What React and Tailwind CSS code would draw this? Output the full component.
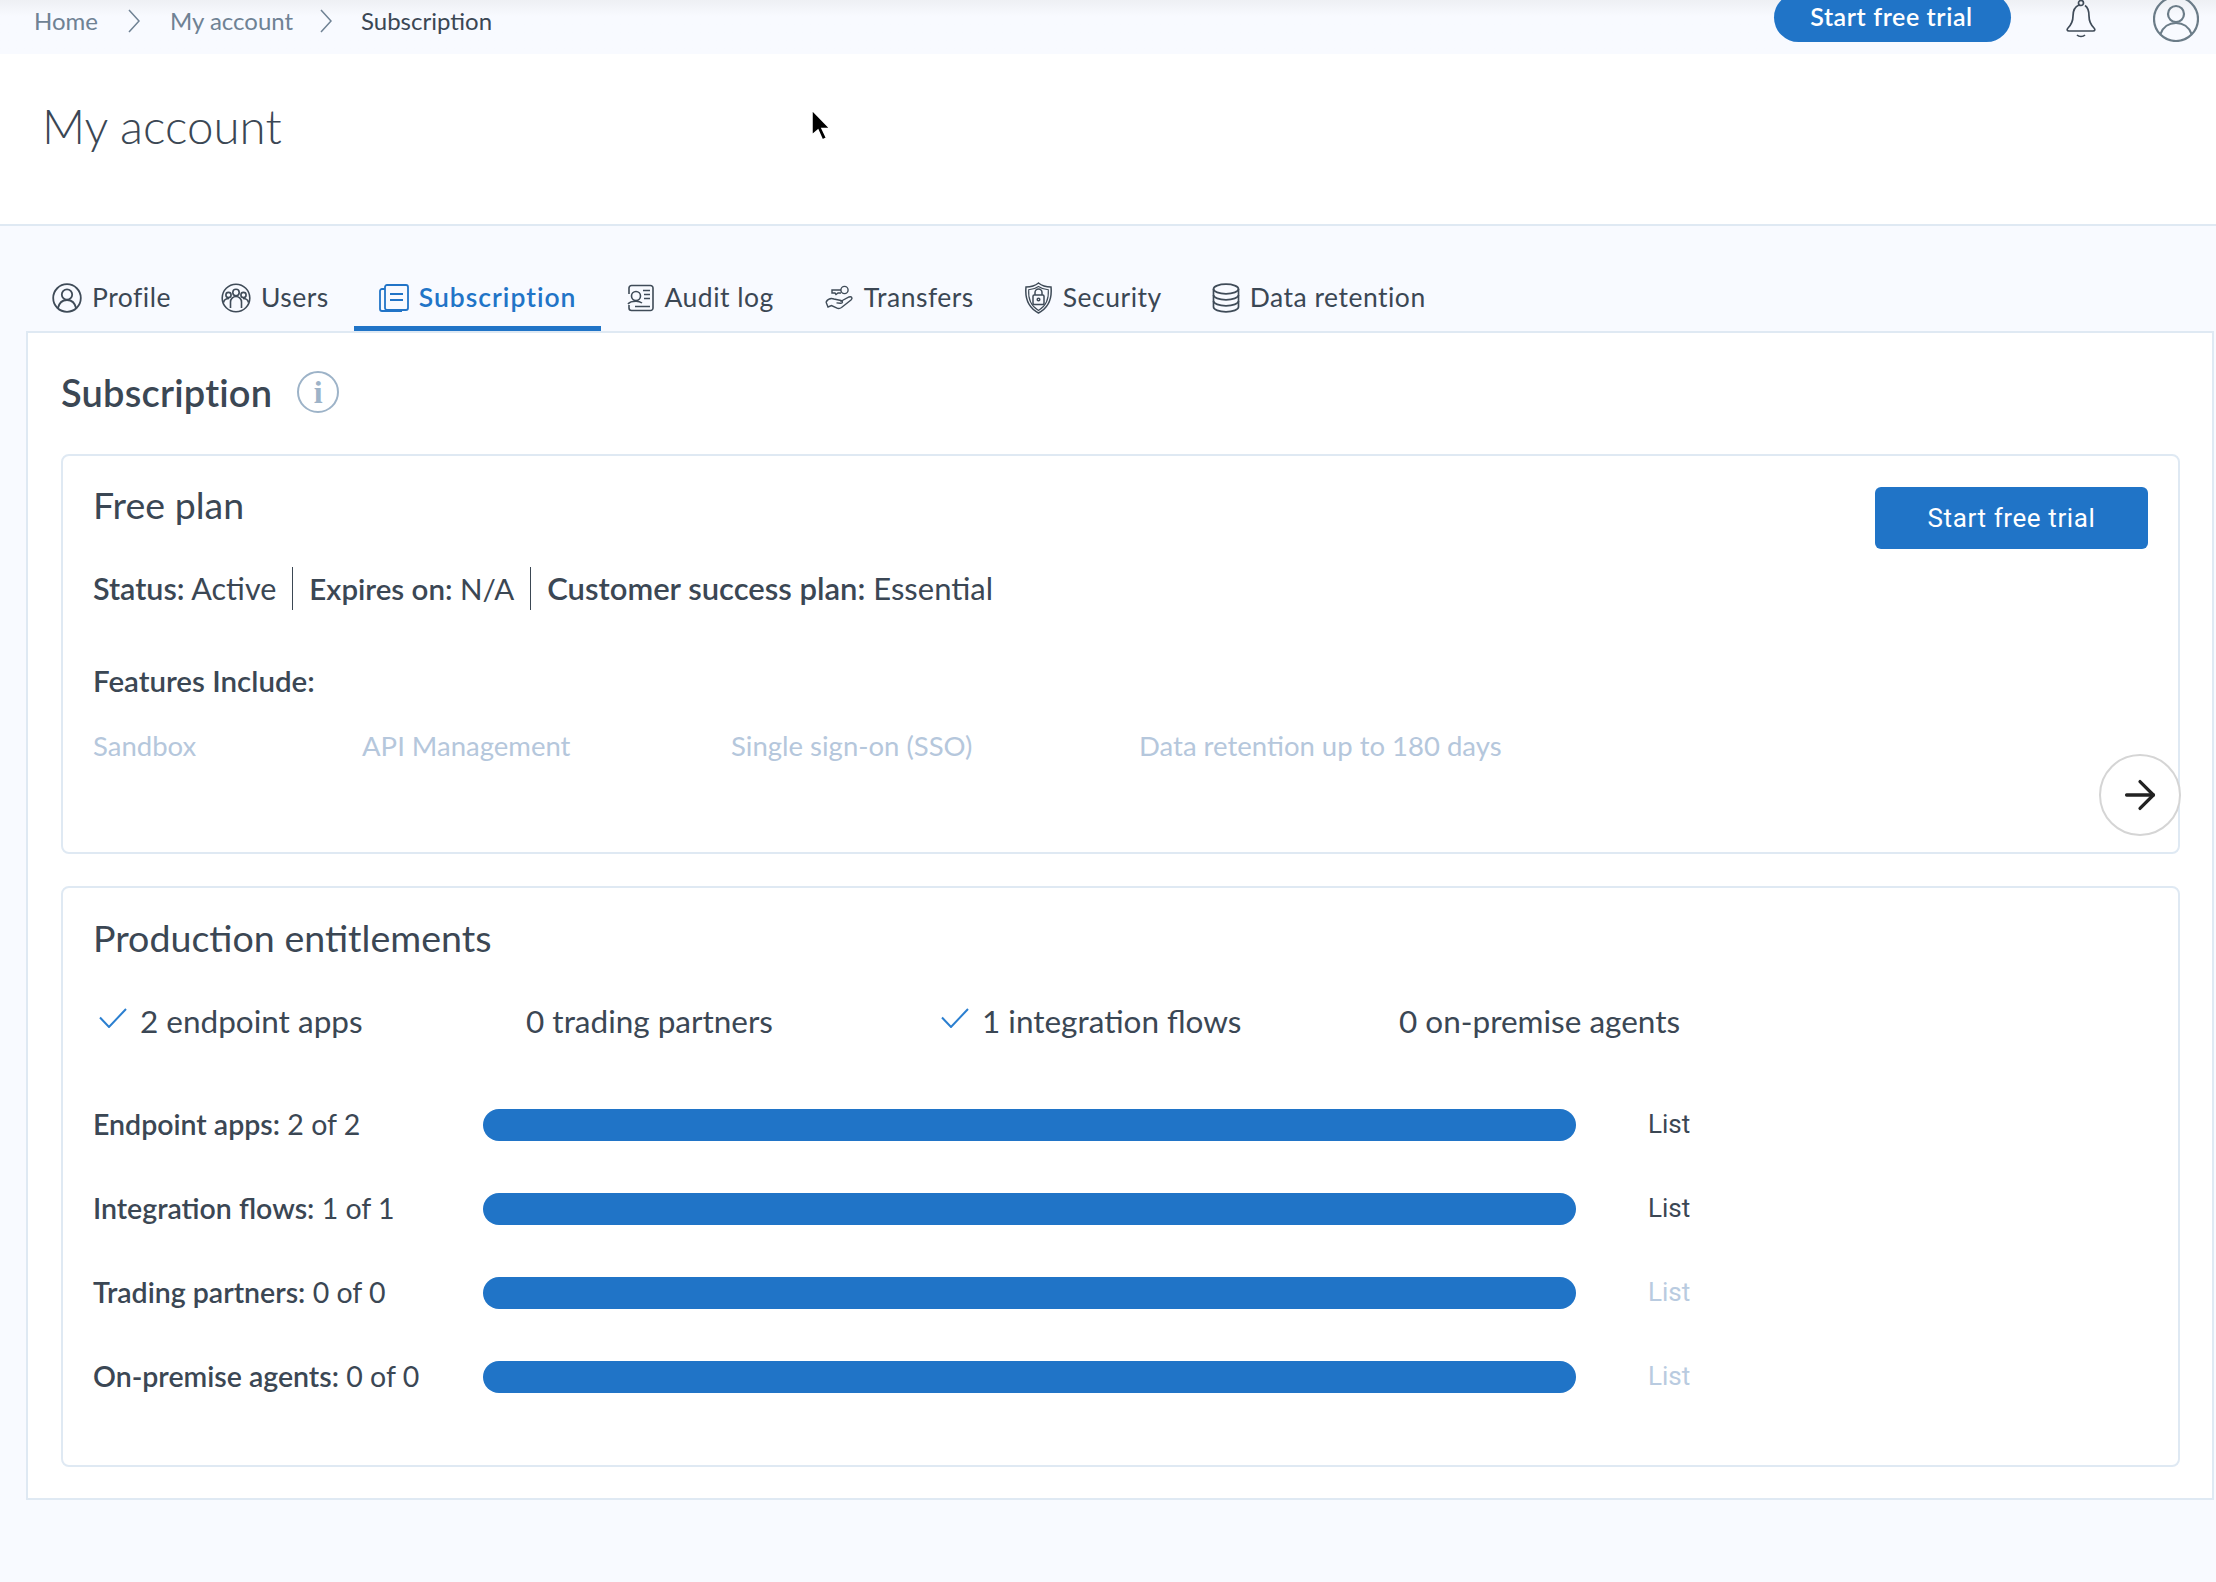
import { ArrowRight } from "lucide-react";

const ink = "#3f4b58";

function ProfileIcon() {
  return (
    <svg width="30" height="30" viewBox="0 0 30 30" fill="none" stroke={ink} strokeWidth="1.8">
      <circle cx="15" cy="15" r="13.800" />
      <circle cx="15" cy="11.500" r="5.200" />
      <path d="M5.800 25.500c1.200-5.500 4.800-8.500 9.200-8.500s8 3 9.200 8.500" />
    </svg>
  );
}

function UsersIcon() {
  return (
    <svg width="30" height="30" viewBox="0 0 30 30" fill="none" stroke={ink} strokeWidth="1.6">
      <circle cx="15" cy="15" r="13.800" />
      <circle cx="15" cy="9.500" r="3.200" />
      <circle cx="7.500" cy="12" r="2.600" />
      <circle cx="22.500" cy="12" r="2.600" />
      <path d="M9.500 25v-6c0-3 2.400-5.500 5.500-5.500s5.500 2.500 5.500 5.500v6" />
      <path d="M2.500 19.500c.5-2.600 2.600-4 5.500-4M27.500 19.500c-.5-2.600-2.600-4-5.500-4" />
    </svg>
  );
}

function SubscriptionIcon() {
  return (
    <svg width="30" height="30" viewBox="0 0 30 30" fill="none" stroke="#2174c7" strokeWidth="1.800">
      <rect x="6" y="2" width="23" height="25" rx="2" />
      <path d="M6 6H3a2 2 0 0 0-2 2v18a2 2 0 0 0 2 2h20" />
      <path d="M11 11h13M11 17h13" />
    </svg>
  );
}

function AuditIcon() {
  return (
    <svg width="28" height="28" viewBox="0 0 26 28" fill="none" stroke={ink} strokeWidth="1.600">
      <path d="M2 10V4a2.500 2.500 0 0 1 2.500-2.500h19A2.500 2.500 0 0 1 26 4v20a2.500 2.500 0 0 1-2.500 2.500h-19A2.500 2.500 0 0 1 2 24v-3" />
      <circle cx="9" cy="12" r="4.500" />
      <path d="M1 20c1.500-2 4.500-2.800 8-2.800 2.500 0 4.500.6 6 1.800" />
      <path d="M16 6.500h7M17 10.500h6M17 14.500h6M8 22.500h15" />
    </svg>
  );
}

function TransfersIcon() {
  return (
    <svg width="30" height="26" viewBox="0 0 29 26" fill="none" stroke={ink} strokeWidth="1.400">
      <circle cx="20" cy="5" r="3.600" />
      <path d="M16.500 5H7.500v3h3l1 1.500 2-1.500h3" />
      <path d="M1.500 17c2-3 5-4 8-3l7 1.500c2 .4 2 3-.5 2.800l-4-.4" />
      <path d="M16 16.500 24.500 12c2.600-1 4 1.200 2 3L17 22.500c-1.600 1.200-3.400 1.200-5 .4L7 20.500 3.500 22 1.500 17" />
    </svg>
  );
}

function SecurityIcon() {
  return (
    <svg width="29" height="32" viewBox="0 0 28 32" fill="none" stroke={ink} strokeWidth="1.500">
      <path d="M14 1c3 2.500 7.500 4 12.500 4 1 10-1 20-12.500 26C2.500 25 .5 15 1.500 5 6.500 5 11 3.500 14 1Z" />
      <path d="M14 4.500c2.500 1.800 6 3 9.800 3.300.6 8-1.300 15.700-9.800 20.700C5.500 23.500 3.600 15.800 4.200 7.800 8 7.500 11.500 6.300 14 4.500Z" strokeWidth="1.100" />
      <rect x="8.500" y="13" width="11" height="9.500" rx="1.200" />
      <path d="M10.500 13v-2.500a3.500 3.500 0 0 1 7 0V13" />
      <circle cx="14" cy="17.500" r="1.300" />
    </svg>
  );
}

function DataIcon() {
  return (
    <svg width="28" height="30" viewBox="0 0 28 30" fill="none" stroke={ink} strokeWidth="1.700">
      <ellipse cx="14" cy="6" rx="12.500" ry="4.800" />
      <path d="M1.500 6v18c0 2.700 5.600 4.800 12.500 4.800S26.500 26.700 26.500 24V6" />
      <path d="M1.500 12c0 2.700 5.600 4.800 12.500 4.800S26.500 14.700 26.500 12M1.500 18c0 2.700 5.600 4.800 12.500 4.800S26.500 20.700 26.500 18" />
    </svg>
  );
}

function Tick() {
  return (
    <svg width="28" height="20" viewBox="0 0 28 20" fill="none" stroke="#2b7fd0" strokeWidth="2" className="-mt-[6px] ml-[6px] shrink-0">
      <path d="M1 9.500 10 19 27 1" />
    </svg>
  );
}

const tabs = [
  { name: "Profile", Icon: ProfileIcon },
  { name: "Users", Icon: UsersIcon },
  { name: "Subscription", Icon: SubscriptionIcon, active: true },
  { name: "Audit log", Icon: AuditIcon },
  { name: "Transfers", Icon: TransfersIcon },
  { name: "Security", Icon: SecurityIcon },
  { name: "Data retention", Icon: DataIcon },
];

const meters = [
  { label: "Endpoint apps:", value: "2 of 2" },
  { label: "Integration flows:", value: "1 of 1" },
  { label: "Trading partners:", value: "0 of 0", muted: true },
  { label: "On-premise agents:", value: "0 of 0", muted: true },
];

export default function App() {
  return (
    <div className="relative h-[1582px] w-[2216px] overflow-hidden bg-[#f8faff] font-['Lato','Noto_Sans',sans-serif] text-[#3b4754]">
      <div className="flex h-[54px] items-center overflow-hidden bg-gradient-to-b from-[#eef0f4] to-[#f8faff] to-30% pl-[34px] pr-[17px]">
        <div className="flex -translate-y-[6px] items-center text-[24px] text-[#6f8294]">
          <span className="w-[94px]">Home</span>
          <svg width="12" height="24" viewBox="0 0 12 24" fill="none" stroke="#6f8294" strokeWidth="1.500" className="mr-[30px]"><path d="m1 1 10 11L1 23" /></svg>
          <span className="w-[150px]">My account</span>
          <svg width="12" height="24" viewBox="0 0 12 24" fill="none" stroke="#6f8294" strokeWidth="1.500" className="mr-[29px]"><path d="m1 1 10 11L1 23" /></svg>
          <span className="text-[#3b4754]">Subscription</span>
        </div>
        <div className="ml-auto flex items-center">
          <button className="-mt-[19px] flex h-[49px] w-[237px] items-center justify-center rounded-full bg-[#2074c7] pb-[2px] pr-[2px] text-[25px] font-semibold tracking-[0.6px] text-white">
            Start free trial
          </button>
          <svg width="32" height="39" viewBox="0 0 32 39" fill="none" stroke="#3f4b58" strokeWidth="1.700" className="-mt-[15px] ml-[54px]">
            <circle cx="16" cy="3" r="2.500" />
            <path d="M14 5C9 7 8 11 8 16c0 6-2 9-5 12-1.500 1.500-1 3 1 3h24c2 0 2.500-1.500 1-3-3-3-5-6-5-12 0-5-1-8.500-4-10.500" />
            <path d="M12 35c2 2 6 2 8 0" />
          </svg>
          <svg width="46" height="46" viewBox="0 0 46 46" fill="none" stroke="#6b7c88" strokeWidth="2.200" className="-mt-[16px] ml-[56px]">
            <circle cx="23" cy="23" r="22" />
            <circle cx="23" cy="18" r="8" />
            <path d="M7.500 38c2.500-7 8.500-11 15.500-11s13 4 15.500 11" />
          </svg>
        </div>
      </div>

      <header className="h-[172px] border-b-2 border-[#dfe9f3] bg-white pl-[42px] pt-[44px]">
        <h1 className="text-[47.500px] font-light leading-[56px]">My account</h1>
      </header>

      <nav className="flex h-[105px] items-end pl-[27px]">
        {tabs.map(({ name, Icon, active }) => (
          <div
            key={name}
            className={`flex h-[62px] items-center gap-[10px] border-b-[5px] px-[25px] pt-[1px] text-[26.500px] ${
              active ? "border-[#2074c7] font-semibold tracking-[1px] text-[#2174c7]" : "border-transparent tracking-[0.5px]"
            }`}
          >
            <Icon />
            {name}
          </div>
        ))}
      </nav>

      <main className="ml-[26px] mr-[2px] h-[1169px] border-2 border-[#dfe9f3] bg-white pl-[33px] pr-[32px] pt-[37px]">
        <div className="flex items-center gap-[25px]">
          <h2 className="text-[38px] font-semibold leading-[44px] tracking-[0.2px]">Subscription</h2>
          <div className="flex h-[42px] w-[42px] items-center justify-center rounded-full border-2 border-[#9db3c8] font-['Liberation_Serif',serif] text-[32px] font-bold text-[#9db3c8]">
            i
          </div>
        </div>

        <section className="relative mt-[40px] flex h-[400px] flex-col rounded-lg border-2 border-[#dfe9f3] px-[30px] pt-[27px]">
          <h3 className="text-[37.500px] leading-[44px]">Free plan</h3>
          <button className="absolute right-[30px] top-[31px] flex h-[62px] w-[273px] items-center justify-center rounded-md bg-[#2074c7] font-['Roboto',sans-serif] text-[26px] tracking-[0.6px] text-white">
            Start free trial
          </button>
          <div className="mt-[40px] flex items-center text-[30.500px] leading-[43px]">
            <span className="border-r-[1.500px] border-[#3b4754] pr-[16px]"><b className="font-semibold">Status:</b> Active</span>
            <span className="border-r-[1.500px] border-[#3b4754] px-[16px] text-[29.500px]"><b className="font-semibold">Expires on:</b> N/A</span>
            <span className="pl-[16px] text-[31px]"><b className="font-semibold">Customer success plan:</b> Essential</span>
          </div>
          <div className="mt-[51px] text-[29.500px] font-semibold leading-[40px]">Features Include:</div>
          <div className="mt-[25px] flex text-[27.500px] leading-[40px] text-[#b5c7dc]">
            <span className="w-[269px]">Sandbox</span>
            <span className="w-[369px]">API Management</span>
            <span className="w-[408px]">Single sign-on (SSO)</span>
            <span>Data retention up to 180 days</span>
          </div>
          <button className="absolute bottom-[16px] -right-[3px] flex h-[82px] w-[82px] items-center justify-center rounded-full border-2 border-[#d5d5d5] bg-white text-[#222]">
            <ArrowRight size={46} strokeWidth={1.700} />
          </button>
        </section>

        <section className="mt-[32px] h-[581px] rounded-lg border-2 border-[#dfe9f3] px-[30px] pt-[28px]">
          <h3 className="text-[37.600px] leading-[44px]">Production entitlements</h3>
          <div className="mt-[39px] flex text-[31.500px] leading-[44px]">
            <span className="flex w-[433px] items-center gap-[13px]"><Tick />2 endpoint apps</span>
            <span className="w-[409px]">0 trading partners</span>
            <span className="flex w-[464px] items-center gap-[13px]"><Tick />1 integration flows</span>
            <span>0 on-premise agents</span>
          </div>
          <div className="mt-[65.500px] flex flex-col gap-[52px]">
            {meters.map((m) => (
              <div key={m.label} className="flex h-[32px] items-center">
                <div className="w-[390px] shrink-0 text-[28.500px] leading-none"><b className="font-semibold">{m.label}</b> {m.value}</div>
                <div className="h-[32px] w-[1093px] shrink-0 rounded-full bg-[#2074c7]" />
                <div className={`ml-[72px] font-['Roboto',sans-serif] text-[26px] ${m.muted ? "text-[#b9cbe0]" : ""}`}>List</div>
              </div>
            ))}
          </div>
        </section>
      </main>

      <svg width="22" height="34" viewBox="0 0 22 34" className="absolute left-[810px] top-[109px]">
        <path d="M2 1v25l6-5 4.500 10 4-2-4.500-9.500h8Z" fill="#000" stroke="#fff" strokeWidth="1.500" />
      </svg>
    </div>
  );
}
